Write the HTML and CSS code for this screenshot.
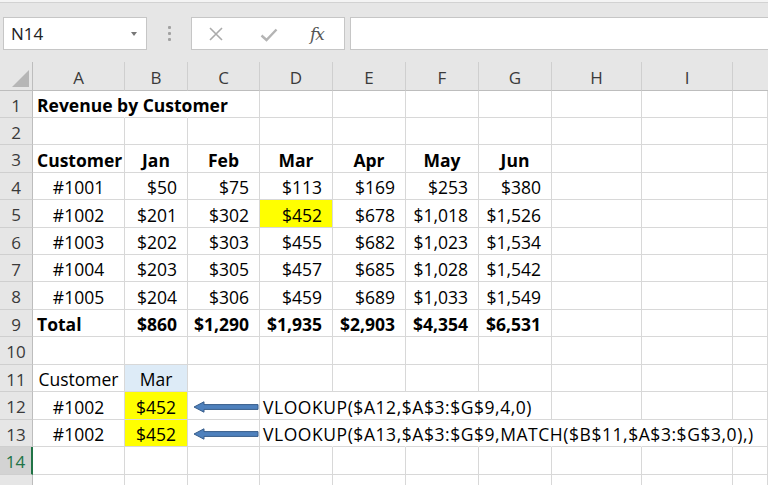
FILE: index.html
```html
<!DOCTYPE html>
<html>
<head>
<meta charset="utf-8">
<link rel="stylesheet" href="styles.css">
</head>
<body>
<div class="app">
  <div class="toolbar">
    <div class="namebox"><span class="name">N14</span><span class="caret"></span></div>
    <div class="grip"><i></i><i></i><i></i></div>
    <div class="fxbtns">
      <svg class="ico-x" width="16" height="16" viewBox="0 0 16 16"><path d="M2 2L14 14M14 2L2 14" stroke="#ababab" stroke-width="1.6" fill="none"/></svg>
      <svg class="ico-ok" width="18" height="14" viewBox="0 0 18 14"><path d="M1.5 7.5L6.5 12L16.5 1.5" stroke="#b4b4b4" stroke-width="2.4" fill="none"/></svg>
      <span class="fx">fx</span>
    </div>
    <div class="formula"></div>
  </div>
  <div class="sheet">
    <div class="grid">
      <div class="corner"><span class="tri"></span></div>
      <div class="ch">A</div><div class="ch">B</div><div class="ch">C</div><div class="ch">D</div><div class="ch">E</div><div class="ch">F</div><div class="ch">G</div><div class="ch">H</div><div class="ch">I</div><div class="ch last"></div>

      <div class="rh">1</div><div class="c b ov nb">Revenue by Customer</div><div class="c nb"></div><div class="c"></div><div class="c"></div><div class="c"></div><div class="c"></div><div class="c"></div><div class="c"></div><div class="c"></div><div class="c"></div>

      <div class="rh">2</div><div class="c"></div><div class="c"></div><div class="c"></div><div class="c"></div><div class="c"></div><div class="c"></div><div class="c"></div><div class="c"></div><div class="c"></div><div class="c"></div>

      <div class="rh">3</div><div class="c b">Customer</div><div class="c b m">Jan</div><div class="c b m">Feb</div><div class="c b m">Mar</div><div class="c b m">Apr</div><div class="c b m">May</div><div class="c b m">Jun</div><div class="c"></div><div class="c"></div><div class="c"></div>

      <div class="rh">4</div><div class="c m">#1001</div><div class="c r">$50</div><div class="c r">$75</div><div class="c r">$113</div><div class="c r">$169</div><div class="c r">$253</div><div class="c r">$380</div><div class="c"></div><div class="c"></div><div class="c"></div>

      <div class="rh">5</div><div class="c m">#1002</div><div class="c r">$201</div><div class="c r">$302</div><div class="c r hl">$452</div><div class="c r">$678</div><div class="c r">$1,018</div><div class="c r">$1,526</div><div class="c"></div><div class="c"></div><div class="c"></div>

      <div class="rh">6</div><div class="c m">#1003</div><div class="c r">$202</div><div class="c r">$303</div><div class="c r">$455</div><div class="c r">$682</div><div class="c r">$1,023</div><div class="c r">$1,534</div><div class="c"></div><div class="c"></div><div class="c"></div>

      <div class="rh">7</div><div class="c m">#1004</div><div class="c r">$203</div><div class="c r">$305</div><div class="c r">$457</div><div class="c r">$685</div><div class="c r">$1,028</div><div class="c r">$1,542</div><div class="c"></div><div class="c"></div><div class="c"></div>

      <div class="rh">8</div><div class="c m">#1005</div><div class="c r">$204</div><div class="c r">$306</div><div class="c r">$459</div><div class="c r">$689</div><div class="c r">$1,033</div><div class="c r">$1,549</div><div class="c"></div><div class="c"></div><div class="c"></div>

      <div class="rh">9</div><div class="c b">Total</div><div class="c b r">$860</div><div class="c b r">$1,290</div><div class="c b r">$1,935</div><div class="c b r">$2,903</div><div class="c b r">$4,354</div><div class="c b r">$6,531</div><div class="c"></div><div class="c"></div><div class="c"></div>

      <div class="rh">10</div><div class="c"></div><div class="c"></div><div class="c"></div><div class="c"></div><div class="c"></div><div class="c"></div><div class="c"></div><div class="c"></div><div class="c"></div><div class="c"></div>

      <div class="rh">11</div><div class="c m">Customer</div><div class="c m lb">Mar</div><div class="c"></div><div class="c"></div><div class="c"></div><div class="c"></div><div class="c"></div><div class="c"></div><div class="c"></div><div class="c"></div>

      <div class="rh">12</div><div class="c m">#1002</div><div class="c m hl">$452</div><div class="c"></div><div class="c ov nb fm">VLOOKUP($A12,$A$3:$G$9,4,0)</div><div class="c nb"></div><div class="c nb"></div><div class="c"></div><div class="c"></div><div class="c"></div><div class="c"></div>

      <div class="rh">13</div><div class="c m">#1002</div><div class="c m hl">$452</div><div class="c"></div><div class="c ov nb fm">VLOOKUP($A13,$A$3:$G$9,MATCH($B$11,$A$3:$G$3,0),)</div><div class="c nb"></div><div class="c nb"></div><div class="c nb"></div><div class="c nb"></div><div class="c nb"></div><div class="c"></div>

      <div class="rh sel">14</div><div class="c"></div><div class="c"></div><div class="c"></div><div class="c"></div><div class="c"></div><div class="c"></div><div class="c"></div><div class="c"></div><div class="c"></div><div class="c"></div>

      <div class="rh"></div><div class="c"></div><div class="c"></div><div class="c"></div><div class="c"></div><div class="c"></div><div class="c"></div><div class="c"></div><div class="c"></div><div class="c"></div><div class="c"></div>
    </div>
    <svg class="arrow a1" width="66" height="12" viewBox="0 0 66 12"><path d="M1 6L11 0.8V3.6H65V8.4H11V11.2Z" fill="#4f81bd" stroke="#385d8a" stroke-width="1"/></svg>
    <svg class="arrow a2" width="66" height="12" viewBox="0 0 66 12"><path d="M1 6L11 0.8V3.6H65V8.4H11V11.2Z" fill="#4f81bd" stroke="#385d8a" stroke-width="1"/></svg>
  </div>
</div>
</body>
</html>
```
FILE: styles.css
```css
* { box-sizing: border-box; }
html, body { margin: 0; padding: 0; }
body { width: 768px; height: 485px; overflow: hidden; background: #fff; font-family: "Open Sans", "Lato", sans-serif; color: #000; }

.toolbar {
  height: 62px;
  background: #e6e6e6;
  border-top: 2px solid #f4f4f4;
  display: flex;
  align-items: flex-start;
  padding-top: 15px;
  position: relative;
}
.toolbar::before {
  content: ""; position: absolute; left: 0; right: 0; top: 0; height: 1px; background: #d2d2d2;
}
.namebox {
  margin-left: 3px;
  width: 144px; height: 33px;
  background: #fff; border: 1px solid #c6c6c6;
  display: flex; align-items: center; justify-content: space-between;
  padding: 0 9px 0 7px;
}
.name { font-family: "Open Sans", sans-serif; font-size: 17px; color: #222; }
.caret { width: 0; height: 0; border-left: 3.5px solid transparent; border-right: 3.5px solid transparent; border-top: 4px solid #777; }
.grip { width: 44px; height: 33px; display: flex; flex-direction: column; align-items: center; justify-content: center; gap: 3px; }
.grip i { display: block; width: 3px; height: 3px; background: #a2a2a2; border-radius: 1px; }
.fxbtns {
  width: 154px; height: 33px; background: #fff; border: 1px solid #c6c6c6;
  display: flex; align-items: center; padding-left: 16px;
}
.ico-x { margin-right: 36px; }
.ico-ok { margin-right: 32px; margin-top: 2px; }
.fx { font-family: "DejaVu Serif", "Liberation Serif", serif; font-style: italic; font-size: 17px; color: #555; letter-spacing: -1px; }
.formula { margin-left: 5px; flex: 1; height: 33px; background: #fff; border: 1px solid #c6c6c6; border-right: 0; }

.sheet { position: relative; }
.grid {
  display: grid;
  grid-template-columns: 33px 92px 63px 72px 73px 73px 73px 73px 90px 91px 35px;
  grid-template-rows: 29px 27px 27px 28px 27px 28px 27px 27px 28px 27px 28px 27px 28px 27px 28px 27px;
}
.corner { background: #e6e6e6; border-right: 1px solid #bdbdbd; border-bottom: 1px solid #bdbdbd; position: relative; }
.tri { position: absolute; right: 3px; bottom: 3px; width: 0; height: 0; border-left: 17px solid transparent; border-bottom: 17px solid #b6b6b6; }
.ch {
  background: #e6e6e6;
  border-bottom: 1px solid #bdbdbd;
  border-right: 1px solid #cfcfcf;
  display: flex; align-items: center; justify-content: center;
  padding-top: 2px;
  font-size: 17px; color: #3a3a3a;
  position: relative;
}
.ch.last { border-right: 0; }
.rh {
  background: #e6e6e6;
  border-right: 1px solid #bdbdbd;
  border-bottom: 1px solid #cfcfcf;
  display: flex; align-items: center; justify-content: center;
  padding-top: 2px;
  font-size: 17px; color: #3a3a3a;
}
.rh.sel { background: #d3d3d3; color: #217346; border-right: 2px solid #217346; }
.c {
  border-right: 1px solid #d8d8d8;
  border-bottom: 1px solid #d8d8d8;
  display: flex; align-items: center;
  padding: 2px 3px 0 4px;
  font-size: 17.5px;
  white-space: nowrap;
}
.c.nb { border-right-color: transparent; }
.c.ov { overflow: visible; position: relative; z-index: 1; }
.c.b { font-weight: 700; }
.c.r { justify-content: flex-end; padding-right: 10px; padding-left: 0; }
.c.m { justify-content: center; padding-left: 0; padding-right: 0; }
.c.hl { background: #ffff00; }
.c.lb { background: #ddebf7; }
.c.fm { padding-left: 3px; letter-spacing: 0.55px; }

.arrow { position: absolute; left: 193px; }
.a1 { top: 339px; }
.a2 { top: 366px; }
```
